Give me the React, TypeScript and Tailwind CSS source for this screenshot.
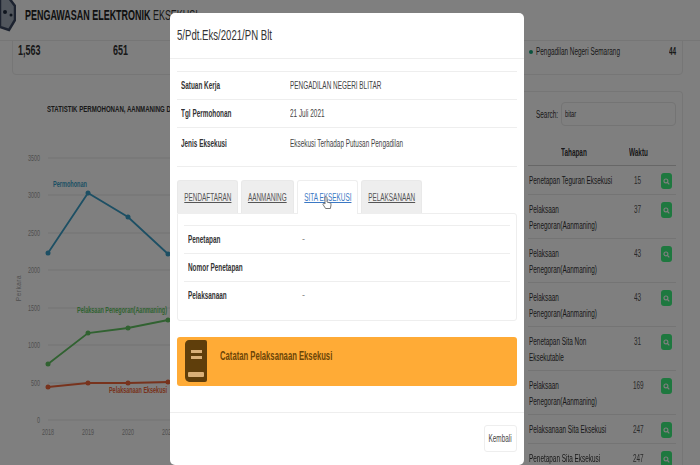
const font = "font-['Liberation_Sans',Arial,sans-serif]";
const svgFont = "Liberation Sans, sans-serif";

// the whole capture is horizontally squeezed, so text gets narrowed
function Sq({ children, center }: { children: React.ReactNode; center?: boolean }) {
  return (
    <span className={`inline-block shrink-0 scale-x-[0.64] whitespace-nowrap ${center ? "origin-center" : "origin-left"}`}>
      {children}
    </span>
  );
}

const chartSeries = [
  { color: "#3a9fc8", points: "48,254 88,194 128,218 168,255" },
  { color: "#62c462", points: "48,365 88,334 128,329 168,321" },
  { color: "#f0663a", points: "48,388 88,384 128,384 168,383" },
];

const rows = [
  { name: ["Penetapan Teguran Eksekusi"], time: 15 },
  { name: ["Pelaksaan", "Penegoran(Aanmaning)"], time: 37 },
  { name: ["Pelaksaan", "Penegoran(Aanmaning)"], time: 43 },
  { name: ["Pelaksaan", "Penegoran(Aanmaning)"], time: 43 },
  { name: ["Penetapan Sita Non", "Eksekutable"], time: 31 },
  { name: ["Pelaksaan", "Penegoran(Aanmaning)"], time: 169 },
  { name: ["Pelaksanaan Sita Eksekusi"], time: 247 },
  { name: ["Penetapan Sita Eksekusi"], time: 247 },
];

function Chart() {
  const grid = [159, 196, 234, 271, 309, 346, 384, 421];
  const labels = ["3500", "3000", "2500", "2000", "1500", "1000", "500", "0"];
  return (
    <svg width="170" height="340" viewBox="0 140 170 340" className="block">
      {grid.map((y, i) => (
        <g key={y}>
          <line x1="48" x2="170" y1={y} y2={y} stroke="#e6e6e6" />
          <text
            x="40"
            y={y + 3}
            textAnchor="end"
            fontSize="9"
            fill="#a0a0a0"
            fontFamily={svgFont}
            textLength={labels[i].length * 3}
            lengthAdjust="spacingAndGlyphs"
          >
            {labels[i]}
          </text>
        </g>
      ))}
      {["2018", "2019", "2020", "2021"].map((t, i) => (
        <text key={t} x={48 + i * 40} y="436" textAnchor="middle" fontSize="9" fill="#a0a0a0" fontFamily={svgFont} textLength="12" lengthAdjust="spacingAndGlyphs">
          {t}
        </text>
      ))}
      <text transform="translate(21 289) rotate(-90)" textAnchor="middle" fontSize="6.5" letterSpacing="0.5" fill="#a0a0a0" fontFamily={svgFont}>
        Perkara
      </text>
      {chartSeries.map((s) => (
        <g key={s.color}>
          <polyline points={s.points} fill="none" stroke={s.color} strokeWidth="1.8" />
          {s.points.split(" ").map((p) => (
            <circle key={p} cx={p.split(",")[0]} cy={p.split(",")[1]} r="2.5" fill={s.color} />
          ))}
        </g>
      ))}
      <text x="53" y="188" fontSize="9.5" fontWeight="700" fill="#3a9fc8" fontFamily={svgFont} textLength="34" lengthAdjust="spacingAndGlyphs">Permohonan</text>
      <text x="77" y="314" fontSize="9.5" fontWeight="700" fill="#62c462" fontFamily={svgFont} textLength="90" lengthAdjust="spacingAndGlyphs">Pelaksaan Penegoran(Aanmaning)</text>
      <text x="109" y="394" fontSize="9.5" fontWeight="700" fill="#f0663a" fontFamily={svgFont} textLength="58" lengthAdjust="spacingAndGlyphs">Pelaksanaan Eksekusi</text>
    </svg>
  );
}

function Background() {
  return (
    <div className="flex h-full flex-col text-[#333]">
      <div className="flex h-10 shrink-0 items-start">
        <svg width="16" height="32" viewBox="0 0 16 32" className="shrink-0">
          <path d="M0 -2 H9 L15 6 V20 L9 30 L0 27 Z" fill="#a3adba" stroke="#3a4760" strokeWidth="2.5" />
          <circle cx="5" cy="12" r="2" fill="#1f2a3d" />
          <circle cx="11" cy="15" r="1.5" fill="#1f2a3d" />
        </svg>
        <div className="ml-[9px] mt-[8px] text-[14px] leading-[15px]">
          <Sq>
            <span className="font-bold text-[#222]">PENGAWASAN ELEKTRONIK</span> <span>EKSEKUSI</span>
          </Sq>
        </div>
      </div>
      <div className="border-t border-[#ececec]">
        <div className="mx-3 -mt-px mr-[17px] flex h-[35px] items-start rounded-b-sm border border-[#ececec] text-[14px] leading-[19px]">
          <span className="ml-[5px] w-[95px] font-bold">
            <Sq>1,563</Sq>
          </span>
          <span className="font-bold">
            <Sq>651</Sq>
          </span>
          <div className="ml-auto mr-[6px] mt-px flex w-[147px] items-center text-[10px]">
            <span className="mr-[3px] size-[4px] shrink-0 rounded-full bg-[#14a37a]" />
            <span className="w-[133px] shrink-0">
              <Sq>Pengadilan Negeri Semarang</Sq>
            </span>
            <span className="font-bold">
              <Sq>44</Sq>
            </span>
          </div>
        </div>
      </div>
      <div className="flex min-h-0 flex-1 pr-[17px] pt-[16px]">
        <div className="w-[170px] shrink-0 overflow-hidden">
          <div className="pl-[47px] pt-[13px] text-[9.5px] font-bold leading-[10px]">
            <Sq>STATISTIK PERMOHONAN, AANMANING DAN EKSEKUSI</Sq>
          </div>
          <div className="mt-[25px]">
            <Chart />
          </div>
        </div>
        <div className="ml-[340px] flex min-w-0 flex-1 flex-col rounded-t-sm border border-b-0 border-[#ececec] pl-[17px] pr-[6px] text-[10px]">
          <div className="flex h-[53px] shrink-0 items-start pt-[10px]">
            <span className="ml-[8px] mt-[5px] w-[25px]">
              <Sq>Search:</Sq>
            </span>
            <div className="h-[24px] flex-1 rounded-sm border border-[#e8e8e8] pl-[3px] text-[9px] leading-[22px]">
              <Sq>bitar</Sq>
            </div>
          </div>
          <div className="flex h-[21px] shrink-0 items-start border-b border-[#cfcfcf] font-bold">
            <span className="ml-[33px] w-[68px]">
              <Sq>Tahapan</Sq>
            </span>
            <Sq>Waktu</Sq>
          </div>
          {rows.map((r, i) => (
            <div key={i} className={`flex shrink-0 items-start border-b border-[#e8e8e8] pt-[7px] ${r.name.length > 1 ? "h-[44px]" : "h-[29px]"}`}>
              <div className="w-[97px] shrink-0 pl-px leading-[16px]">
                {r.name.map((n) => (
                  <div key={n}>
                    <Sq>{n}</Sq>
                  </div>
                ))}
              </div>
              <div className="flex w-[26px] shrink-0 justify-center leading-[15px] text-[#555]">
                <Sq center>{r.time}</Sq>
              </div>
              <div className="ml-[10px] flex h-[16px] w-[11px] items-center justify-center rounded-[3px] bg-[#3cf07e]">
                <svg width="7" height="7" viewBox="0 0 10 10">
                  <circle cx="4.2" cy="4.2" r="2.8" fill="none" stroke="#ffffff" strokeWidth="1.6" />
                  <line x1="6.4" y1="6.4" x2="9" y2="9" stroke="#ffffff" strokeWidth="1.6" />
                </svg>
              </div>
            </div>
          ))}
        </div>
      </div>
    </div>
  );
}

function InfoRow({ label, value, last }: { label: string; value: string; last?: boolean }) {
  return (
    <div className={`flex border-t border-[#eeeeee] text-[#333] ${last ? "h-[40px] items-start border-b pt-[8px]" : "h-[28px] items-center"}`}>
      <span className="w-[113px] shrink-0 pl-[4px] text-[10px] font-bold">
        <Sq>{label}</Sq>
      </span>
      <span className="text-[10px] text-[#444]">
        <Sq>{value}</Sq>
      </span>
    </div>
  );
}

function PanelRow({ label, value }: { label: string; value?: string }) {
  return (
    <div className="flex h-[28px] items-center border-t border-[#eeeeee] text-[#333]">
      <span className="w-[118px] shrink-0 pl-[4px] text-[10px] font-bold">
        <Sq>{label}</Sq>
      </span>
      <span className="text-[9px] text-[#777]">{value}</span>
    </div>
  );
}

function Tab({ label, active, width }: { label: string; active?: boolean; width: string }) {
  return (
    <div
      className={`relative flex items-center justify-center rounded-t-[3px] border border-b-0 text-[10px] underline ${width} ${
        active ? "z-10 -mb-px h-[34px] border-[#eeeeee] bg-white text-[#3b78c4]" : "h-[33px] border-[#e9e9e9] bg-[#eeeeee] text-[#555]"
      }`}
    >
      <Sq center>{label}</Sq>
    </div>
  );
}

export default function App() {
  return (
    <div className="h-[465px] w-[700px] overflow-hidden bg-[#808080]">
      <div className={`relative h-full w-full bg-white blur-[0.4px] ${font}`}>
        <Background />
        <div className="absolute inset-0 bg-black/50" />
        <div className="absolute inset-0 pl-[170px] pt-[13px]">
          <div className="flex h-[452px] w-[354px] flex-col rounded-[5px] bg-white">
            <div className="flex h-[46px] shrink-0 items-center border-b border-[#eeeeee] pl-[7px] text-[15px] text-[#333]">
              <Sq>5/Pdt.Eks/2021/PN Blt</Sq>
            </div>
            <div className="flex-1 px-[7px] pt-[12px]">
              <InfoRow label="Satuan Kerja" value="PENGADILAN NEGERI BLITAR" />
              <InfoRow label="Tgl Permohonan" value="21 Juli 2021" />
              <InfoRow label="Jenis Eksekusi" value="Eksekusi Terhadap Putusan Pengadilan" last />
              <div className="mt-[13px] flex items-start gap-[3px]">
                <Tab label="PENDAFTARAN" width="w-[61px]" />
                <Tab label="AANMANING" width="w-[53px]" />
                <div className="relative">
                  <Tab label="SITA EKSEKUSI" width="w-[61px]" active />
                  <svg width="10" height="14" viewBox="0 0 10 14" className="absolute left-[25px] top-[16px] z-20">
                    <path d="M3 1.5 C3 .5 5 .5 5 1.5 V6 L8 6.8 C9 7 9 8 9 9 L8.4 12.5 H3.6 L1 8.5 C.5 7.5 2 7 3 8 Z" fill="#fff" stroke="#555" strokeWidth="0.8" />
                  </svg>
                </div>
                <Tab label="PELAKSANAAN" width="w-[61px]" />
              </div>
              <div className="h-[108px] rounded-b-[3px] rounded-tr-[3px] border border-[#eeeeee] px-[6px] pt-[11px]">
                <PanelRow label="Penetapan" value="-" />
                <PanelRow label="Nomor Penetapan" />
                <PanelRow label="Pelaksanaan" value="-" />
              </div>
              <div className="mt-[16px] flex h-[49px] rounded-[3px] bg-[#ffab36] pl-[8px] pt-[3px]">
                <svg width="22" height="42" viewBox="0 0 22 42" className="shrink-0">
                  <path d="M4 0 H20 Q22 0 22 2 V40 Q22 42 20 42 H6 C2 42 0 40 0 37 V4 C0 2 2 0 4 0 Z" fill="#5f3e0b" />
                  <rect x="6" y="10" width="11" height="3" fill="#d9b078" />
                  <rect x="6" y="16" width="11" height="3" fill="#d9b078" />
                  <rect x="3" y="32" width="16" height="5" rx="1" fill="#d9b078" />
                </svg>
                <span className="ml-[13px] mt-[10px] text-[12px] font-bold leading-[13px] text-[#6d4506]">
                  <Sq>Catatan Pelaksanaan Eksekusi</Sq>
                </span>
              </div>
            </div>
            <div className="flex h-[53px] shrink-0 items-start justify-end border-t border-[#eeeeee] pr-[7px] pt-[12px]">
              <div className="flex h-[27px] w-[33px] items-center justify-center rounded-[3px] border border-[#eeeeee] text-[10px] text-[#444]">
                <Sq center>Kembali</Sq>
              </div>
            </div>
          </div>
        </div>
      </div>
    </div>
  );
}
